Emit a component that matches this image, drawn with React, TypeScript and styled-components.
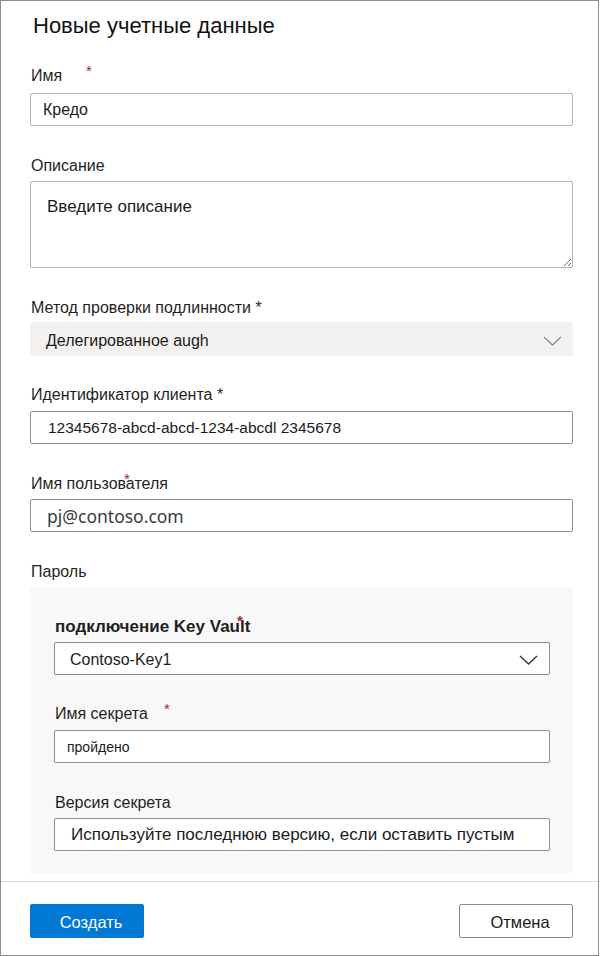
import React from "react";
import styled, { createGlobalStyle } from "styled-components";

const GlobalStyle = createGlobalStyle`
  html, body {
    margin: 0;
    padding: 0;
    background: #ffffff;
  }
  body {
    font-family: "Liberation Sans", Arial, sans-serif;
    color: #1b1b1b;
  }
  * {
    box-sizing: border-box;
  }
`;

const Panel = styled.div`
  width: 599px;
  height: 956px;
  border: 1px solid #8c8c8c;
  display: flex;
  flex-direction: column;
  background: #ffffff;
`;

const Body = styled.div`
  padding: 0 25px 0 29px;
  display: flex;
  flex-direction: column;
`;

const Title = styled.h1`
  margin: 13px 0 0 3px;
  font-size: 22px;
  font-weight: 400;
  line-height: 24px;
  color: #111;
`;

const Field = styled.div<{ $top?: number }>`
  display: flex;
  flex-direction: column;
  margin-top: ${({ $top }) => $top ?? 30}px;
`;

const Label = styled.label<{ $strong?: boolean; $gap?: number }>`
  display: flex;
  align-items: flex-start;
  font-size: ${({ $strong }) => ($strong ? 17 : 16)}px;
  font-weight: ${({ $strong }) => ($strong ? 600 : 400)};
  line-height: 20px;
  margin: 0 0 ${({ $gap }) => $gap ?? 5}px 1px;
  color: #1f1f1f;
  position: relative;
`;

const Star = styled.span<{ $x: number; $y?: number }>`
  position: absolute;
  left: ${({ $x }) => $x}px;
  top: ${({ $y }) => $y ?? -3}px;
  color: #a4262c;
  font-size: 15px;
  line-height: 15px;
`;

const TextInput = styled.input<{ $dark?: boolean; $pad?: number; $size?: number; $font?: string; $color?: string }>`
  height: 33px;
  width: 100%;
  padding: 0 10px 0 ${({ $pad }) => $pad ?? 12}px;
  border: 1px solid ${({ $dark }) => ($dark ? "#8f8f8f" : "#b3b3b3")};
  border-radius: 2px;
  background: #fff;
  font-family: ${({ $font }) => $font ?? `"Liberation Sans", Arial, sans-serif`};
  font-size: ${({ $size }) => $size ?? 16}px;
  color: ${({ $color }) => $color ?? "#1b1b1b"};
  outline: none;
`;

const TextArea = styled.textarea`
  height: 87px;
  width: 100%;
  padding: 15px 16px;
  border: 1px solid #b3b3b3;
  border-radius: 2px;
  font-family: "Liberation Sans", Arial, sans-serif;
  font-size: 17px;
  resize: vertical;
  outline: none;
  display: block;
  &::placeholder {
    color: #1b1b1b;
  }
`;

const Select = styled.div<{ $filled?: boolean }>`
  height: ${({ $filled }) => ($filled ? 34 : 33)}px;
  display: flex;
  align-items: center;
  justify-content: space-between;
  padding: 0 11px 0 ${({ $filled }) => ($filled ? 16 : 15)}px;
  border-radius: 2px;
  background: ${({ $filled }) => ($filled ? "#f3f2f1" : "#ffffff")};
  border: ${({ $filled }) => ($filled ? "none" : "1px solid #8a8a8a")};
  font-size: 16px;
  color: #1b1b1b;
  padding-top: ${({ $filled }) => ($filled ? 4 : 2)}px;
`;

const Chevron = ({ color }: { color: string }) => (
  <svg width="19" height="10" viewBox="0 0 19 10">
    <polyline points="1,1 9.5,9 18,1" fill="none" stroke={color} strokeWidth="1.3" />
  </svg>
);

const SubPanel = styled.div`
  background: #f8f8f8;
  padding: 30px 23px 23px 24px;
  display: flex;
  flex-direction: column;
  height: 286px;
`;

const Footer = styled.div`
  margin-top: 8px;
  border-top: 1px solid #d8d8d8;
  padding: 22px 25px 0 29px;
  display: flex;
  justify-content: space-between;
`;

const Button = styled.button<{ $primary?: boolean }>`
  height: 34px;
  width: 114px;
  border-radius: 2px;
  font-family: "Liberation Sans", Arial, sans-serif;
  font-size: 16.5px;
  padding: 3px 0 0 8px;
  border: 1px solid ${({ $primary }) => ($primary ? "#0078d4" : "#8a8a8a")};
  background: ${({ $primary }) => ($primary ? "#0078d4" : "#ffffff")};
  color: ${({ $primary }) => ($primary ? "#ffffff" : "#1b1b1b")};
`;

export default function App() {
  return (
    <>
      <GlobalStyle />
      <Panel>
        <Body>
          <Title>Новые учетные данные</Title>

          <Field $top={28}>
            <Label $gap={7}>
              Имя
              <Star $x={55}>*</Star>
            </Label>
            <TextInput defaultValue="Кредо" />
          </Field>

          <Field>
            <Label>Описание</Label>
            <TextArea placeholder="Введите описание" />
          </Field>

          <Field>
            <Label $gap={4}>Метод проверки подлинности *</Label>
            <Select $filled>
              <span>Делегированное augh</span>
              <Chevron color="#8a8a8a" />
            </Select>
          </Field>

          <Field $top={29}>
            <Label $gap={6}>Идентификатор клиента *</Label>
            <TextInput $dark $pad={17} $size={15.5} defaultValue="12345678-abcd-abcd-1234-abcdl 2345678" />
          </Field>

          <Field>
            <Label>
              Имя пользователя
              <Star $x={93}>*</Star>
            </Label>
            <TextInput
              $dark
              $pad={16}
              $size={17.5}
              $color="#3a3a3a"
              $font={`"Noto Sans", "Open Sans", sans-serif`}
              defaultValue="pj@contoso.com"
            />
          </Field>

          <Field>
            <Label>Пароль</Label>
            <SubPanel>
              <Field $top={0}>
                <Label $strong $gap={5}>
                  подключение Key Vault
                  <Star $x={182} $y={-4}>*</Star>
                </Label>
                <Select>
                  <span>Contoso-Key1</span>
                  <Chevron color="#333" />
                </Select>
              </Field>

              <Field $top={29}>
                <Label $gap={6}>
                  Имя секрета
                  <Star $x={109}>*</Star>
                </Label>
                <TextInput $dark $pad={12} $size={14} defaultValue="пройдено" />
              </Field>

              <Field>
                <Label>Версия секрета</Label>
                <TextInput $dark $pad={16} $size={17} defaultValue="Используйте последнюю версию, если оставить пустым" />
              </Field>
            </SubPanel>
          </Field>
        </Body>

        <Footer>
          <Button $primary>Создать</Button>
          <Button>Отмена</Button>
        </Footer>
      </Panel>
    </>
  );
}
